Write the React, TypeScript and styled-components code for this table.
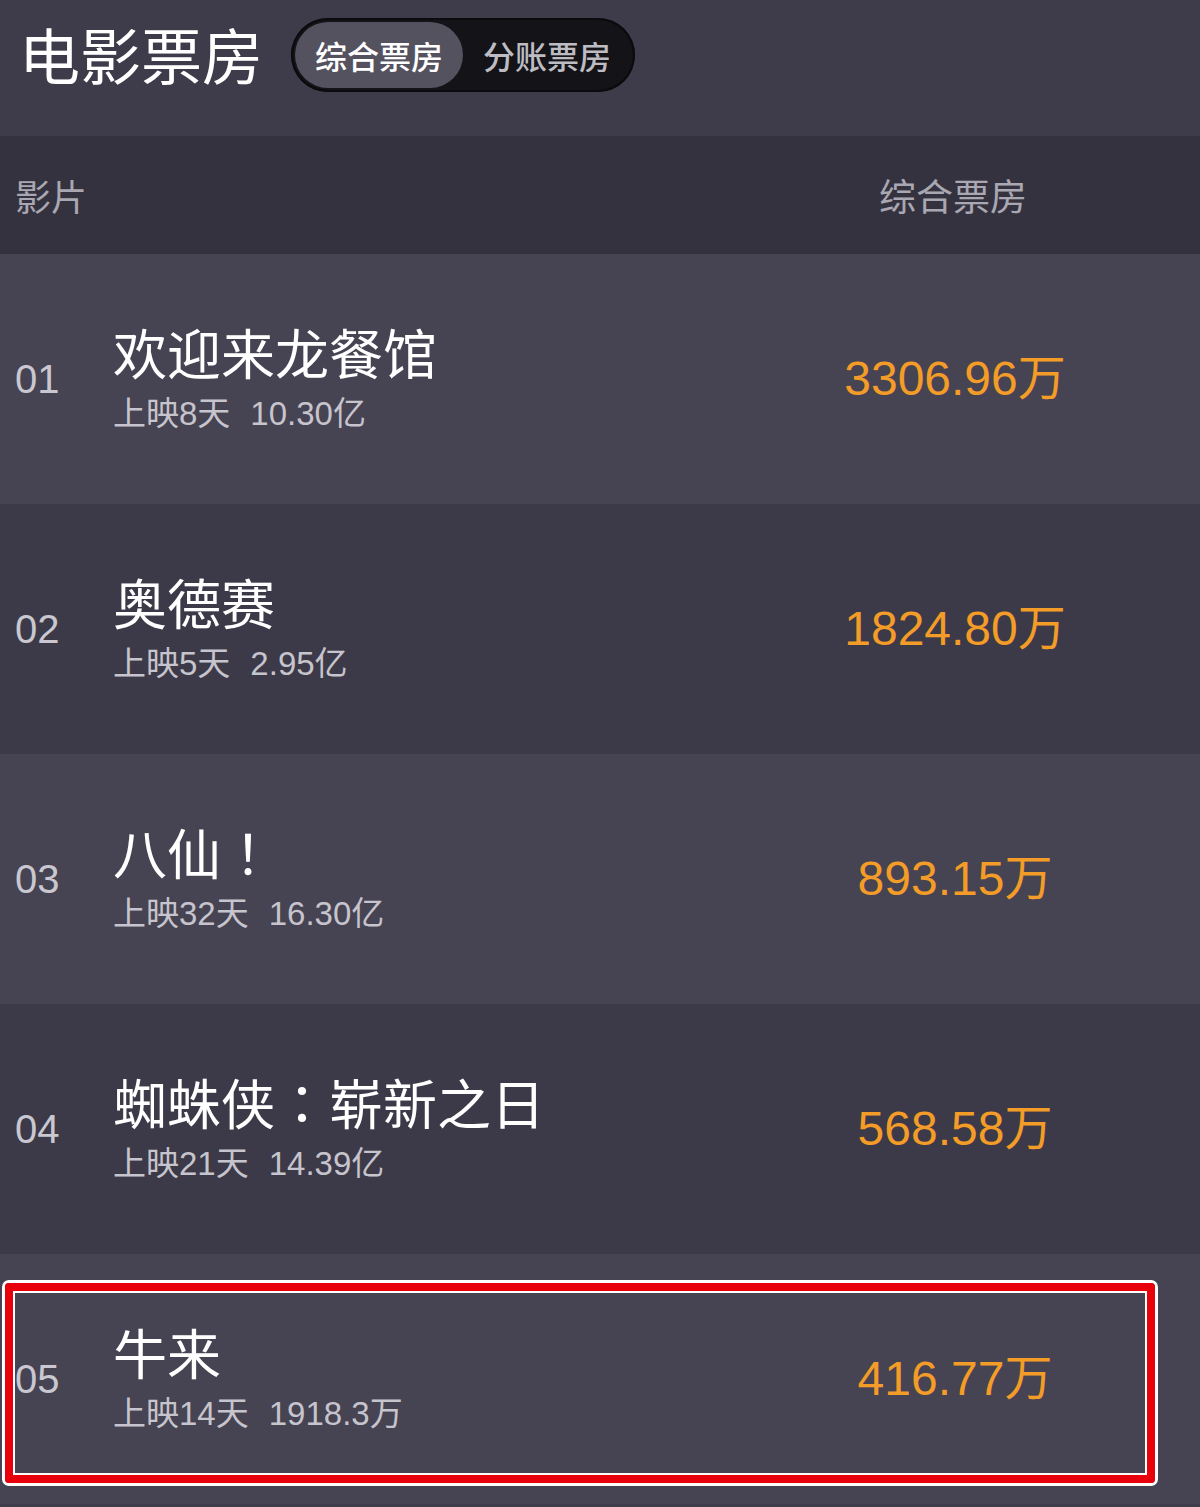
import React from "react";
import styled, { createGlobalStyle } from "styled-components";

const GlobalStyle = createGlobalStyle`
  html, body {
    margin: 0;
    padding: 0;
    background: #3e3c4b;
  }
  body {
    font-family: "Liberation Sans", "Noto Sans CJK SC", sans-serif;
  }
`;

const Page = styled.div`
  width: 1200px;
  min-height: 1507px;
  background: #3e3c4b;
  font-family: "Liberation Sans", "Noto Sans CJK SC", sans-serif;
`;

const TopBar = styled.div`
  height: 136px;
  display: flex;
  align-items: flex-start;
  padding: 18px 0 0 19px;
  box-sizing: border-box;
  gap: 28px;
  background: #3e3c4b;
`;

const PageTitle = styled.h1`
  margin: 0;
  font-family: "Noto Sans CJK SC", sans-serif;
  font-weight: 400;
  font-size: 61px;
  line-height: 72px;
  color: #ffffff;
`;

const Toggle = styled.div`
  display: flex;
  align-items: center;
  height: 74px;
  padding: 0 4px;
  box-sizing: border-box;
  border-radius: 37px;
  background: #141318;
  box-shadow: inset 0 0 0 2px #0b0a0d;
`;

const ToggleItem = styled.div<{ $active?: boolean }>`
  height: 66px;
  padding: 0 20px;
  display: flex;
  align-items: center;
  border-radius: 33px;
  font-family: "Noto Sans CJK SC", sans-serif;
  font-size: 32px;
  font-weight: 500;
  color: ${(p) => (p.$active ? "#ffffff" : "#bdbcc2")};
  background: ${(p) => (p.$active ? "#55525f" : "transparent")};
`;

const HeaderRow = styled.div`
  height: 118px;
  display: grid;
  grid-template-columns: 1fr 490px;
  align-items: center;
  background: #34323f;
  padding-left: 15px;
  font-family: "Noto Sans CJK SC", sans-serif;
  font-size: 36px;
  color: #a9a7b1;
`;

const HeaderRight = styled.div`
  text-align: center;
  font-size: 37px;
  padding-right: 4px;
`;

const Row = styled.div<{ $alt?: boolean }>`
  position: relative;
  height: 250px;
  display: grid;
  grid-template-columns: 98px 1fr 490px;
  align-items: center;
  padding-left: 15px;
  background: ${(p) => (p.$alt ? "#3c3a48" : "#464353")};
`;

const Rank = styled.div`
  font-family: "Liberation Sans", sans-serif;
  font-size: 40px;
  color: #c9c7cf;
  line-height: 1;
`;

const Info = styled.div`
  display: flex;
  flex-direction: column;
`;

const Name = styled.div`
  font-family: "Noto Sans CJK SC", sans-serif;
  font-size: 54px;
  line-height: 60px;
  color: #ffffff;
  margin-top: -4px;
`;

const Punct = styled.span`
  font-family: "Noto Sans CJK JP", "Noto Sans CJK SC", sans-serif;
`;

const Sub = styled.div`
  margin-top: 14px;
  display: flex;
  gap: 20px;
  font-family: "Liberation Sans", "Noto Sans CJK SC", sans-serif;
  font-size: 33px;
  line-height: 36px;
  color: #c6c4cc;
`;

const BoxOffice = styled.div`
  text-align: center;
  font-family: "Liberation Sans", "Noto Sans CJK SC", sans-serif;
  font-size: 48px;
  color: #f39c27;
  line-height: 1;
`;

const Highlight = styled.div`
  position: absolute;
  left: 2px;
  right: 42px;
  top: 26px;
  bottom: 18px;
  border: 3px solid #ffffff;
  border-radius: 7px;
  pointer-events: none;
`;

const HighlightRed = styled.div`
  width: 100%;
  height: 100%;
  box-sizing: border-box;
  border: 8px solid #e8000b;
  border-radius: 4px;
  box-shadow: inset 0 0 0 2px #ffffff;
`;

type Film = {
  rank: string;
  name: string;
  days: string;
  total: string;
  box: string;
  highlight?: boolean;
};

const films: Film[] = [
  { rank: "01", name: "欢迎来龙餐馆", days: "上映8天", total: "10.30亿", box: "3306.96万" },
  { rank: "02", name: "奥德赛", days: "上映5天", total: "2.95亿", box: "1824.80万" },
  { rank: "03", name: "八仙！", days: "上映32天", total: "16.30亿", box: "893.15万" },
  { rank: "04", name: "蜘蛛侠：崭新之日", days: "上映21天", total: "14.39亿", box: "568.58万" },
  { rank: "05", name: "牛来", days: "上映14天", total: "1918.3万", box: "416.77万", highlight: true },
];

function renderName(name: string) {
  return name.split(/([！：])/).map((part, i) =>
    part === "！" || part === "：" ? <Punct key={i}>{part}</Punct> : part
  );
}

export default function App() {
  return (
    <Page>
      <GlobalStyle />
      <TopBar>
        <PageTitle>电影票房</PageTitle>
        <Toggle>
          <ToggleItem $active>综合票房</ToggleItem>
          <ToggleItem>分账票房</ToggleItem>
        </Toggle>
      </TopBar>
      <HeaderRow>
        <div>影片</div>
        <HeaderRight>综合票房</HeaderRight>
      </HeaderRow>
      {films.map((f, i) => (
        <Row key={f.rank} $alt={i % 2 === 1}>
          <Rank>{f.rank}</Rank>
          <Info>
            <Name>{renderName(f.name)}</Name>
            <Sub>
              <span>{f.days}</span>
              <span>{f.total}</span>
            </Sub>
          </Info>
          <BoxOffice>{f.box}</BoxOffice>
          {f.highlight && (
            <Highlight>
              <HighlightRed />
            </Highlight>
          )}
        </Row>
      ))}
    </Page>
  );
}
